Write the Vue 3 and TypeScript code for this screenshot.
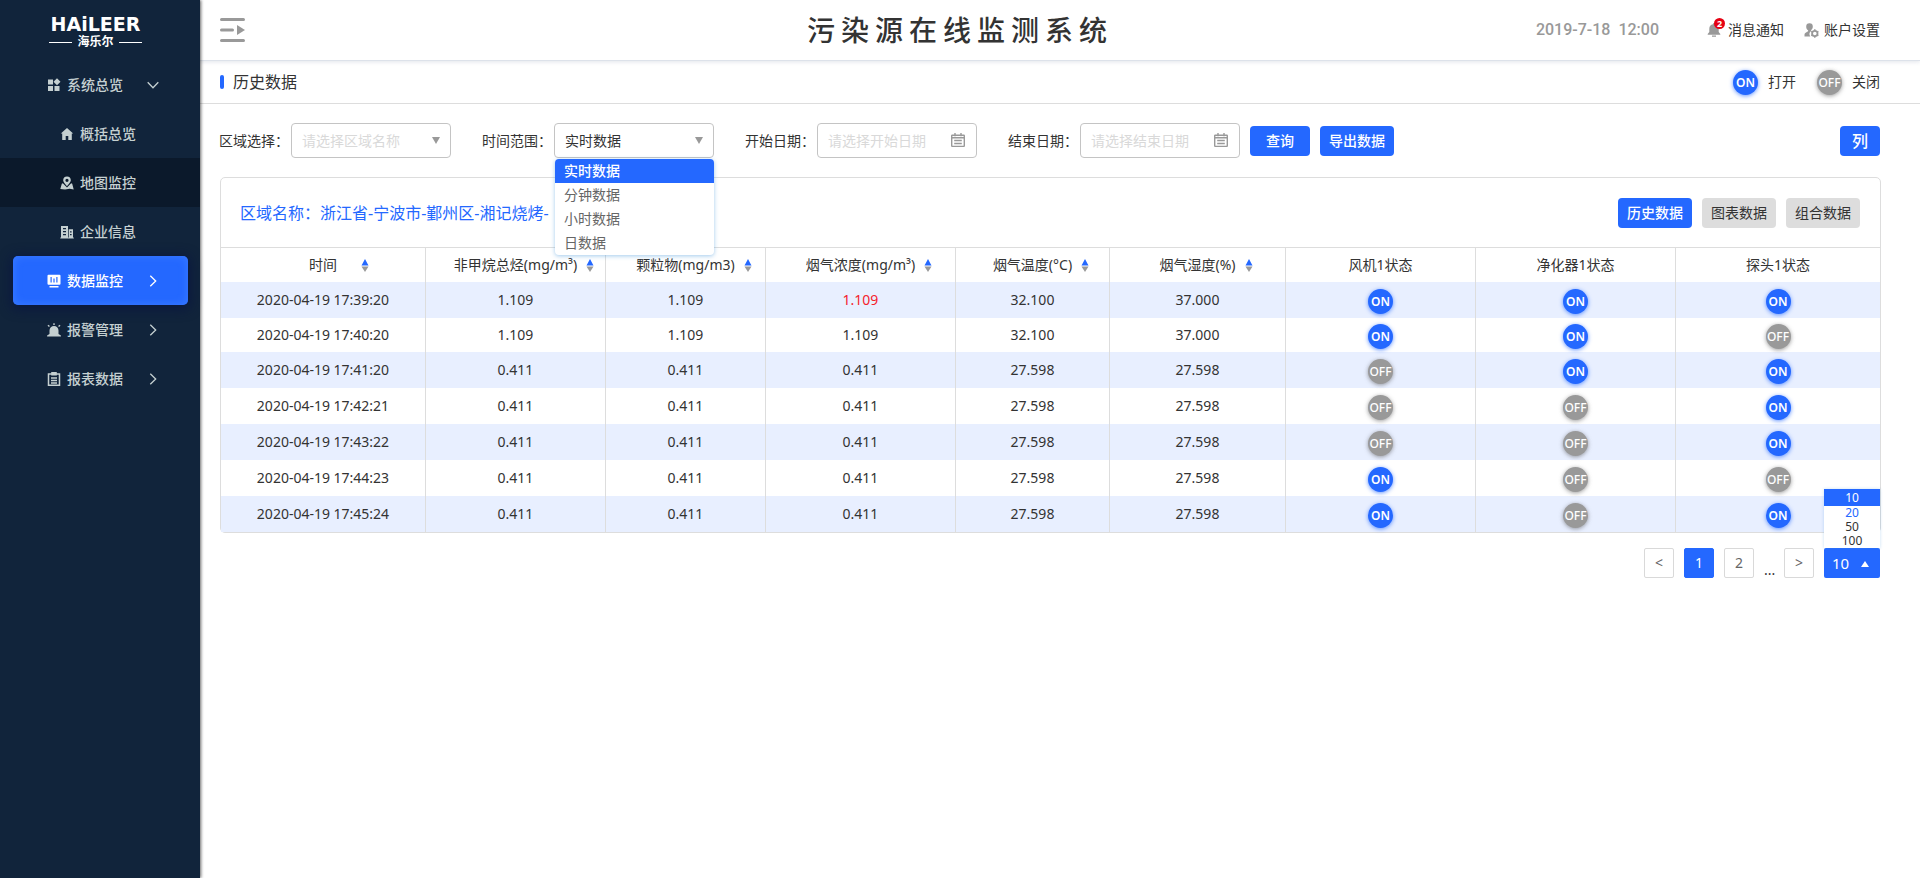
<script setup lang="ts">
import { ref } from 'vue'

interface Column {
  title: string
  width: number
  sortable: boolean
}

interface Row {
  time: string
  values: string[]
  status: boolean[]
  alarm?: number
}

const columns: Column[] = [
  { title: '时间', width: 205, sortable: true },
  { title: '非甲烷总烃(mg/m³)', width: 180, sortable: true },
  { title: '颗粒物(mg/m3)', width: 160, sortable: true },
  { title: '烟气浓度(mg/m³)', width: 190, sortable: true },
  { title: '烟气温度(°C)', width: 154, sortable: true },
  { title: '烟气湿度(%)', width: 176, sortable: true },
  { title: '风机1状态', width: 190, sortable: false },
  { title: '净化器1状态', width: 200, sortable: false },
  { title: '探头1状态', width: 204, sortable: false },
]
const totalWidth = columns.reduce((sum, c) => sum + c.width, 0)

const high = ['1.109', '1.109', '1.109', '32.100', '37.000']
const low = ['0.411', '0.411', '0.411', '27.598', '27.598']

const rows: Row[] = [
  { time: '2020-04-19 17:39:20', values: high, status: [true, true, true], alarm: 2 },
  { time: '2020-04-19 17:40:20', values: high, status: [true, true, false] },
  { time: '2020-04-19 17:41:20', values: low, status: [false, true, true] },
  { time: '2020-04-19 17:42:21', values: low, status: [false, false, true] },
  { time: '2020-04-19 17:43:22', values: low, status: [false, false, true] },
  { time: '2020-04-19 17:44:23', values: low, status: [true, false, false] },
  { time: '2020-04-19 17:45:24', values: low, status: [true, false, true] },
]

const ranges = ['实时数据', '分钟数据', '小时数据', '日数据']
const range = ref('实时数据')
const area = ref('')
const startDate = ref('')
const endDate = ref('')

const tabs = ['历史数据', '图表数据', '组合数据']
const tab = ref('历史数据')

const sizes = [10, 20, 50, 100]
const pageSize = ref(10)
</script>

<template>
  <div class="app">
    <header class="topbar">
      <button class="toggle" type="button" aria-label="收起菜单">
        <svg width="25" height="26" viewBox="0 0 25 26">
          <path d="M1.5 2.5h22M1.5 13h11M1.5 23.5h22" stroke="#999" stroke-width="3" stroke-linecap="round" />
          <path d="M17 8l8 5-8 5z" fill="#999" />
        </svg>
      </button>
      <h1>污染源在线监测系统</h1>
      <div class="tools">
        <time class="clock">2019-7-18&nbsp; 12:00</time>
        <a class="tool notice" href="#notice">
          <span class="bell">
            <svg width="14" height="14" viewBox="0 0 14 14" fill="#999">
              <path d="M6 .3h2v1a4.600 4.600 0 0 1 3.700 4.500v3.200L13.300 11v.8H.7V11l1.600-2V5.800A4.600 4.600 0 0 1 6 1.300zM5 12.600h4v1.200H5z" />
            </svg>
            <span class="count">2</span>
          </span>
          消息通知
        </a>
        <a class="tool account" href="#account">
          <svg width="15" height="15" viewBox="0 0 15 15" fill="#999">
            <path d="M5.500.3a3.300 3.300 0 0 1 3.300 3.400c0 1.600-.8 2.800-1.700 3.400v1A4 4 0 0 0 6.300 13.500H.5v-2c0-1.500 2-2.200 3.600-3.200v-1C3 6.600 2.200 5.400 2.200 3.700A3.300 3.300 0 0 1 5.500.3z" />
            <circle cx="10.800" cy="10.500" r="2.700" fill="#fff" stroke="#999" stroke-width="1.800" />
            <path d="M10.800 6.300v1.500M10.800 13.200v1.500M7.200 8.400l1.200.7M13.200 11.900l1.200.7M7.200 12.600l1.200-.7M13.200 9.100l1.200-.7" stroke="#999" stroke-width="1.500" />
          </svg>
          账户设置
        </a>
      </div>
    </header>

    <aside class="sidebar">
      <div class="logo">
        <span class="brand">HAiLEER</span>
        <span class="brand-cn">海乐尔</span>
      </div>
      <nav>
        <a class="item" href="#overview">
          <svg class="icon" width="14" height="14" viewBox="0 0 14 14" fill="currentColor">
            <path d="M1 1.500h5v5H1zM1 8h5v5H1zM7.500 8h5v5h-5zM10 .3l3.500 3.500L10 7.300 6.500 3.800z" />
          </svg>
          <span>系统总览</span>
          <svg class="arrow" width="12" height="12" viewBox="0 0 12 12"><path d="M.7 3.300L6 8.700l5.300-5.400" /></svg>
        </a>
        <a class="item sub" href="#summary">
          <svg class="icon" width="14" height="14" viewBox="0 0 14 14" fill="currentColor">
            <path d="M7 1l6.200 5.600h-1.400V13H8.300V9H5.700v4H2.200V6.600H.8z" />
          </svg>
          <span>概括总览</span>
        </a>
        <a class="item sub dark" href="#map">
          <svg class="icon" width="14" height="14" viewBox="0 0 14 14" fill="currentColor">
            <path fill-rule="evenodd" d="M7 .5a3.800 3.800 0 0 1 3.800 3.800C10.800 6.500 7 10.200 7 10.200S3.200 6.500 3.200 4.300A3.800 3.800 0 0 1 7 .5zm0 2.200a1.600 1.600 0 1 0 0 3.200 1.600 1.600 0 0 0 0-3.200z" />
            <path d="M2.800 7.300L7 11.500l4.200-4.200 1 .4 1.500 5.800-4-.8L5 13.500l-4.700-.5L1.800 7.800z" />
          </svg>
          <span>地图监控</span>
        </a>
        <a class="item sub" href="#company">
          <svg class="icon" width="14" height="14" viewBox="0 0 14 14" fill="currentColor">
            <path fill-rule="evenodd" d="M1 1h7v11.500h.7V4.200H13v8.300h.8v1H.3v-1H1zm2 2v1.300h3V3zm0 3v1.300h3V6zm0 3v1.300h3V9zm7-2.800v1.200h1.600V6.200zm0 2.800v1.200h1.600V9z" />
          </svg>
          <span>企业信息</span>
        </a>
        <a class="item active" href="#monitor">
          <svg class="icon" width="14" height="14" viewBox="0 0 14 14" fill="currentColor">
            <path fill-rule="evenodd" d="M1.500.8h11a1 1 0 0 1 1 1v8a1 1 0 0 1-1 1h-11a1 1 0 0 1-1-1v-8a1 1 0 0 1 1-1zM3.500 3v5.500h1.200V3zm2.900 1.500v4h1.200v-4zM9.300 3v5.500h1.200V3zM2.500 12h9v1.500h-9z" />
          </svg>
          <span>数据监控</span>
          <svg class="arrow" width="12" height="12" viewBox="0 0 12 12"><path d="M3.300.7L8.700 6l-5.400 5.300" /></svg>
        </a>
        <a class="item" href="#alarm">
          <svg class="icon" width="14" height="14" viewBox="0 0 14 14" fill="currentColor">
            <path d="M2.500 11V7.500a4.500 4.500 0 0 1 9 0V11l2.400 1.500v1H.1v-1zM6.300.2h1.400v1.900H6.300zM.5 2.800l.9-1 1.500 1.300-.9 1zM13.500 2.800l-.9-1-1.500 1.300.9 1z" />
          </svg>
          <span>报警管理</span>
          <svg class="arrow" width="12" height="12" viewBox="0 0 12 12"><path d="M3.300.7L8.700 6l-5.400 5.300" /></svg>
        </a>
        <a class="item" href="#report">
          <svg class="icon" width="14" height="14" viewBox="0 0 14 14" fill="none" stroke="currentColor" stroke-width="1.500">
            <path d="M1.500 2h11v11.200h-11zM4 6h6M4 8.500h6M4 11h6" />
            <path d="M4.200 0v3.500h5.600V0z" fill="currentColor" stroke="none" />
          </svg>
          <span>报表数据</span>
          <svg class="arrow" width="12" height="12" viewBox="0 0 12 12"><path d="M3.300.7L8.700 6l-5.400 5.300" /></svg>
        </a>
      </nav>
    </aside>

    <main>
      <div class="page-head">
        <h2>历史数据</h2>
        <div class="legend">
          <span class="badge on">ON</span><span class="legend-text">打开</span>
          <span class="badge off">OFF</span><span class="legend-text">关闭</span>
        </div>
      </div>

      <form class="filters" @submit.prevent>
        <div class="field">
          <label for="area">区域选择：</label>
          <div class="control caret">
            <select id="area" v-model="area" class="empty">
              <option value="">请选择区域名称</option>
            </select>
          </div>
        </div>
        <div class="field">
          <label for="range">时间范围：</label>
          <div class="control caret">
            <select id="range" v-model="range">
              <option v-for="r in ranges" :key="r">{{ r }}</option>
            </select>
            <ul class="menu" role="listbox" aria-label="时间范围">
              <li v-for="r in ranges" :key="r" role="option" :aria-selected="r === range" :class="{ chosen: r === range }" @click="range = r">{{ r }}</li>
            </ul>
          </div>
        </div>
        <div class="field">
          <label for="start">开始日期：</label>
          <div class="control">
            <input id="start" v-model="startDate" type="text" placeholder="请选择开始日期" />
            <svg class="calendar" width="14" height="14" viewBox="0 0 14 14"><path d="M1.200 2.200h11.600a.5.5 0 0 1 .5.5v9.800a1 1 0 0 1-1 1H1.700a1 1 0 0 1-1-1V2.700a.5.5 0 0 1 .5-.5zM.7 4.700h12.600M4 0v3.200M10 0v3.200M3.200 7.500h7.600M3.200 10.500h7.600" /></svg>
          </div>
        </div>
        <div class="field">
          <label for="end">结束日期：</label>
          <div class="control">
            <input id="end" v-model="endDate" type="text" placeholder="请选择结束日期" />
            <svg class="calendar" width="14" height="14" viewBox="0 0 14 14"><path d="M1.200 2.200h11.600a.5.5 0 0 1 .5.5v9.800a1 1 0 0 1-1 1H1.700a1 1 0 0 1-1-1V2.700a.5.5 0 0 1 .5-.5zM.7 4.700h12.600M4 0v3.200M10 0v3.200M3.200 7.500h7.600M3.200 10.500h7.600" /></svg>
          </div>
        </div>
        <div class="actions">
          <button class="btn search" type="submit">查询</button>
          <button class="btn" type="button">导出数据</button>
        </div>
        <button class="btn columns" type="button">列</button>
      </form>

      <section class="card">
        <div class="card-head">
          <h3>区域名称：浙江省-宁波市-鄞州区-湘记烧烤-</h3>
          <div class="tabs">
            <button v-for="t in tabs" :key="t" type="button" class="btn" :class="{ plain: t !== tab }" @click="tab = t">{{ t }}</button>
          </div>
        </div>
        <table>
          <colgroup>
            <col v-for="c in columns" :key="c.title" :style="{ width: (c.width / totalWidth) * 100 + '%' }" />
          </colgroup>
          <thead>
            <tr>
              <th v-for="c in columns" :key="c.title" scope="col">
                <span class="th">
                  {{ c.title }}
                  <svg v-if="c.sortable" class="sort" width="8" height="14" viewBox="0 0 8 14">
                    <path d="M4 0l3.500 6.500h-7z" fill="#2468ff" />
                    <path d="M.5 7.500h7L4 13z" fill="#999" />
                  </svg>
                </span>
              </th>
            </tr>
          </thead>
          <tbody>
            <tr v-for="row in rows" :key="row.time">
              <td>{{ row.time }}</td>
              <td v-for="(v, i) in row.values" :key="i" :class="{ alarm: row.alarm === i }">{{ v }}</td>
              <td v-for="(s, i) in row.status" :key="'s' + i" class="state">
                <span class="badge" :class="s ? 'on' : 'off'">{{ s ? 'ON' : 'OFF' }}</span>
              </td>
            </tr>
          </tbody>
        </table>
      </section>

      <nav class="pager" aria-label="分页">
        <button type="button" aria-label="上一页">&lt;</button>
        <button type="button" class="current">1</button>
        <button type="button">2</button>
        <span class="dots">...</span>
        <button type="button" aria-label="下一页">&gt;</button>
        <div class="size">
          <ul role="listbox" aria-label="每页条数">
            <li v-for="n in sizes" :key="n" role="option" :aria-selected="n === pageSize" :class="{ chosen: n === pageSize, hover: n === 20 }" @click="pageSize = n">{{ n }}</li>
          </ul>
          <select v-model="pageSize" aria-label="每页条数">
            <option v-for="n in sizes" :key="n" :value="n">{{ n }}</option>
          </select>
        </div>
      </nav>
    </main>
  </div>
</template>

<style>
body {
  margin: 0;
  background: #fff;
}
</style>

<style scoped>
.app {
  display: grid;
  grid-template-columns: 200px minmax(0, 1fr);
  grid-template-rows: auto 1fr;
  min-height: 100vh;
  color: #333;
  font: 14px/20px "Noto Sans", "Noto Sans CJK SC", sans-serif;
}
.app * {
  box-sizing: border-box;
}
button,
input,
select {
  font: inherit;
  margin: 0;
}
button {
  cursor: pointer;
}
a {
  color: inherit;
  text-decoration: none;
}
ul {
  margin: 0;
  padding: 0;
  list-style: none;
}

.topbar {
  grid-column: 1 / -1;
  grid-row: 1;
  display: grid;
  grid-template-columns: 1fr auto 1fr;
  align-items: center;
  height: 61px;
  padding: 0 40px;
  border-bottom: 1px solid #dde2ea;
  box-shadow: 0 1px 4px rgba(60, 80, 120, 0.15);
}
.toggle {
  display: flex;
  justify-self: start;
  margin-left: 180px;
  padding: 0;
  border: 0;
  background: none;
}
h1 {
  margin: 0;
  font-size: 28px;
  line-height: 40px;
  font-weight: 500;
  letter-spacing: 6px;
}
.tools {
  display: flex;
  align-items: center;
  justify-content: flex-end;
}
.clock {
  margin-right: 48px;
  color: #999;
  font: 500 16px/20px "Roboto", sans-serif;
}
.tool {
  display: flex;
  align-items: center;
  gap: 5px;
}
.notice {
  gap: 7px;
}
.account {
  margin-left: 20px;
}
.bell {
  position: relative;
  display: flex;
}
.count {
  position: absolute;
  top: -5px;
  right: -4px;
  width: 11px;
  height: 11px;
  border-radius: 50%;
  background: #e60012;
  color: #fff;
  font-size: 9px;
  line-height: 11px;
  font-weight: 700;
  text-align: center;
}

.sidebar {
  grid-column: 1;
  grid-row: 1 / -1;
  z-index: 2;
  background: #11243b;
  box-shadow: 1px 0 3px rgba(0, 0, 0, 0.6);
  color: #c5d0d1;
}
.logo {
  display: flex;
  flex-direction: column;
  align-items: center;
  height: 60px;
  padding-top: 15px;
  padding-right: 9px;
  color: #fff;
}
.brand {
  font: bold 19px/18px "DejaVu Sans", sans-serif;
}
.brand-cn {
  display: flex;
  align-items: center;
  gap: 5px;
  font-size: 12px;
  line-height: 18px;
  font-weight: 700;
}
.brand-cn::before,
.brand-cn::after {
  content: "";
  width: 23px;
  height: 1px;
  background: #fff;
}
.item {
  display: flex;
  align-items: center;
  height: 49px;
  padding: 0 41px 0 47px;
  font-weight: 500;
}
.item .icon {
  margin-right: 6px;
}
.item.sub {
  padding-left: 60px;
}
.item.dark {
  background: #0b192b;
}
.item.active {
  margin: 0 12px 0 13px;
  padding: 0 29px 0 34px;
  border-radius: 5px;
  background: #2468ff;
  box-shadow: 0 2px 12px 2px #0a1740, inset 0 0 8px #3c7cff;
  color: #fff;
}
.arrow {
  margin-left: auto;
  fill: none;
  stroke: currentColor;
  stroke-width: 1.3;
}

main {
  grid-column: 2;
  grid-row: 2;
}
.page-head {
  display: flex;
  align-items: center;
  justify-content: space-between;
  height: 43px;
  padding: 0 40px 0 20px;
  border-bottom: 1px solid #ddd;
}
h2 {
  display: flex;
  align-items: center;
  gap: 9px;
  margin: 0;
  font-size: 16px;
  line-height: 24px;
  font-weight: 400;
}
h2::before {
  content: "";
  width: 4px;
  height: 14px;
  border-radius: 2px;
  background: #2468ff;
}
.legend {
  display: flex;
  align-items: center;
}
.legend-text {
  margin: 0 21px 0 10px;
}
.legend-text:last-child {
  margin-right: 0;
}
.badge {
  display: inline-block;
  width: 25px;
  height: 25px;
  border-radius: 50%;
  color: #fff;
  font-size: 12px;
  line-height: 25px;
  font-weight: 600;
  text-align: center;
  vertical-align: middle;
}
.on {
  background: #2468ff;
  box-shadow: 0 1px 4px rgba(36, 104, 255, 0.7);
}
.off {
  background: #999;
  box-shadow: 0 1px 4px rgba(90, 90, 90, 0.6);
  font-weight: 500;
}

.filters {
  display: flex;
  align-items: center;
  gap: 31px;
  padding: 19px 40px 19px 19px;
}
.field {
  display: flex;
  align-items: center;
  gap: 2px;
}
.control {
  position: relative;
  width: 160px;
}
.control select,
.control input {
  display: block;
  width: 100%;
  height: 35px;
  padding: 0 10px;
  border: 1px solid #c4c4c4;
  border-radius: 4px;
  outline: 0;
  background: #fff;
  color: #333;
  appearance: none;
}
.control select.empty,
.control input::placeholder {
  color: #d9d9d9;
  opacity: 1;
}
.caret::after {
  content: "";
  position: absolute;
  top: 14px;
  right: 11px;
  border: 4px solid transparent;
  border-top: 7px solid #999;
  border-bottom: 0;
  pointer-events: none;
}
.calendar {
  position: absolute;
  top: 10px;
  right: 12px;
  fill: none;
  stroke: #999;
  stroke-width: 1.4;
}
.menu {
  position: absolute;
  z-index: 3;
  top: 36px;
  left: 1px;
  right: 0;
  overflow: hidden;
  border-radius: 4px;
  background: #fff;
  box-shadow: 0 1px 4px rgba(70, 150, 220, 0.5);
  color: #666;
}
.menu li {
  padding: 0 9px;
  line-height: 24px;
}
.menu .chosen {
  background: #2468ff;
  color: #fff;
  font-weight: 500;
}
.btn {
  height: 30px;
  min-width: 40px;
  padding: 0 9px;
  border: 0;
  border-radius: 4px;
  background: #2468ff;
  color: #fff;
  font-weight: 500;
}
.btn.plain {
  background: #ddd;
  color: #333;
  font-weight: 400;
}
.actions {
  display: flex;
  gap: 10px;
  margin-left: -21px;
}
.search {
  width: 60px;
}
.columns {
  margin-left: auto;
  font-size: 16px;
}

.card {
  margin: 0 39px 0 20px;
  border: 1px solid #ddd;
  border-radius: 5px;
}
.card-head {
  display: flex;
  align-items: center;
  justify-content: space-between;
  height: 69px;
  padding: 0 20px 0 19px;
}
h3 {
  margin: 0;
  color: #2468ff;
  font-size: 16px;
  line-height: 24px;
  font-weight: 400;
}
.tabs {
  display: flex;
  gap: 10px;
}
table {
  width: 100%;
  table-layout: fixed;
  border-collapse: separate;
  border-spacing: 0;
  text-align: center;
}
th,
td {
  height: 36px;
  padding: 0;
  border-right: 1px solid #ddd;
  line-height: 20px;
}
th {
  height: 35px;
  border-top: 1px solid #ddd;
  font-weight: 400;
}
th:last-child,
td:last-child {
  border-right: 0;
}
tbody tr:nth-child(odd) {
  background: #e8efff;
}
tbody tr:nth-child(2) td {
  height: 34px;
}
.state {
  padding-top: 2px;
  line-height: 25px;
}
.alarm {
  color: #f5222d;
}
.th {
  position: relative;
  display: inline-block;
  white-space: nowrap;
}
.sort {
  position: absolute;
  top: 4px;
  left: calc(100% + 9px);
}
th:first-child .sort {
  left: calc(100% + 24px);
}

.pager {
  display: flex;
  justify-content: flex-end;
  gap: 10px;
  padding: 15px 40px;
}
.pager button {
  width: 30px;
  height: 30px;
  padding: 0;
  border: 1px solid #d9d9d9;
  border-radius: 2px;
  background: #fff;
  color: #666;
}
.pager .current {
  border-color: #2468ff;
  background: #2468ff;
  color: #fff;
}
.dots {
  align-self: flex-end;
  width: 10px;
  line-height: 16px;
}
.size {
  position: relative;
}
.size::after {
  content: "";
  position: absolute;
  top: 13px;
  right: 11px;
  border: 4px solid transparent;
  border-top: 0;
  border-bottom: 6px solid #fff;
  pointer-events: none;
}
.size select {
  display: block;
  width: 56px;
  height: 30px;
  padding: 0 8px;
  border: 0;
  border-radius: 2px;
  background: #2468ff;
  color: #fff;
  font-size: 15px;
  appearance: none;
}
.size ul {
  position: absolute;
  bottom: 100%;
  left: 0;
  width: 100%;
  background: #fff;
  box-shadow: 0 0 3px rgba(70, 150, 220, 0.3);
  font-size: 12px;
  line-height: 14px;
  text-align: center;
}
.size .hover {
  color: #2468ff;
}
.size .chosen {
  background: #2468ff;
  color: #fff;
  line-height: 17px;
}
</style>
